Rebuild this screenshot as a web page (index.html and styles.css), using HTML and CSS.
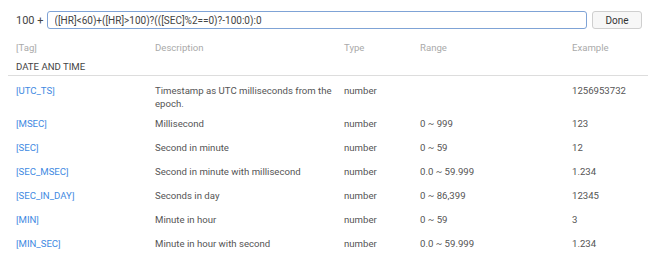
FILE: index.html
```html
<!DOCTYPE html>
<html lang="en">
<head>
    <meta charset="UTF-8">
    <title>Formula Tags</title>
    <link rel="stylesheet" href="styles.css">
</head>
<body>

    <div class="formula-bar">
        <span class="prefix">100 +</span>
        <input class="formula-input" type="text" value="([HR]<60)+([HR]>100)?(([SEC]%2==0)?-100:0):0">
        <button class="done-btn">Done</button>
    </div>

    <div class="tag-table">
        <div class="row head">
            <div>[Tag]</div>
            <div>Description</div>
            <div>Type</div>
            <div>Range</div>
            <div>Example</div>
        </div>

        <div class="section">DATE AND TIME</div>

        <div class="row">
            <div class="tag">[UTC_TS]</div>
            <div class="desc">Timestamp as UTC milliseconds from the epoch.</div>
            <div>number</div>
            <div></div>
            <div>1256953732</div>
        </div>
        <div class="row">
            <div class="tag">[MSEC]</div>
            <div class="desc">Millisecond</div>
            <div>number</div>
            <div>0 ~ 999</div>
            <div>123</div>
        </div>
        <div class="row">
            <div class="tag">[SEC]</div>
            <div class="desc">Second in minute</div>
            <div>number</div>
            <div>0 ~ 59</div>
            <div>12</div>
        </div>
        <div class="row">
            <div class="tag">[SEC_MSEC]</div>
            <div class="desc">Second in minute with millisecond</div>
            <div>number</div>
            <div>0.0 ~ 59.999</div>
            <div>1.234</div>
        </div>
        <div class="row">
            <div class="tag">[SEC_IN_DAY]</div>
            <div class="desc">Seconds in day</div>
            <div>number</div>
            <div>0 ~ 86,399</div>
            <div>12345</div>
        </div>
        <div class="row">
            <div class="tag">[MIN]</div>
            <div class="desc">Minute in hour</div>
            <div>number</div>
            <div>0 ~ 59</div>
            <div>3</div>
        </div>
        <div class="row">
            <div class="tag">[MIN_SEC]</div>
            <div class="desc">Minute in hour with second</div>
            <div>number</div>
            <div>0.0 ~ 59.999</div>
            <div>1.234</div>
        </div>
    </div>

</body>
</html>
```

FILE: styles.css
```css
body {
    font-family: Roboto, "Liberation Sans", sans-serif;
    margin: 0;
    padding: 0;
    background: #fff;
    color: #555;
    overflow: hidden;
}

.formula-bar {
    display: flex;
    align-items: center;
    padding: 11px 8px 0 16px;
}

.prefix {
    font-size: 11px;
    color: #444;
    margin-right: 3px;
}

.formula-input {
    flex: 1;
    height: 18px;
    box-sizing: border-box;
    border: 1px solid #7fa3d6;
    border-radius: 3px;
    padding: 0 7px;
    font-family: inherit;
    font-size: 10px;
    color: #444;
    outline: none;
}

.done-btn {
    width: 50px;
    height: 18px;
    margin-left: 5px;
    border: 1px solid #cfcfcf;
    border-radius: 3px;
    background: #f7f7f7;
    font-family: inherit;
    font-size: 10px;
    color: #333;
    padding: 0;
}

.tag-table {
    margin: 12px 2px 0 8px;
    font-size: 9.6px;
}

.row {
    display: grid;
    grid-template-columns: 139px 189px 76px 152px 1fr;
    box-sizing: border-box;
    min-height: 24px;
    padding: 7.5px 0 0 8px;
    line-height: 13px;
}

.row.head {
    color: #aaa;
    min-height: 0;
    padding-top: 0;
}

.section {
    color: #444;
    padding: 6px 0 2px 8px;
    line-height: 13px;
    border-bottom: 1px solid #ddd;
}

.tag {
    color: #3f8ae2;
}

.desc {
    padding-right: 10px;
}
```
